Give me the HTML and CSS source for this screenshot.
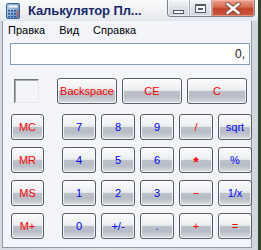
FILE: index.html
```html
<!DOCTYPE html>
<html lang="ru">
<head>
  <meta charset="UTF-8" />
  <title>Калькулятор</title>
  <link rel="stylesheet" href="styles.css">
</head>
<body>
  <div class="window">
    <div class="titlebar">
      <svg class="app-icon" width="14" height="16" viewBox="0 0 14 16">
        <defs>
          <linearGradient id="calc" x1="0" y1="0" x2="1" y2="1">
            <stop offset="0" stop-color="#cfe3f6" />
            <stop offset="1" stop-color="#4b7fbf" />
          </linearGradient>
        </defs>
        <rect x="0.5" y="0.5" width="13" height="15" rx="1.5" fill="url(#calc)" stroke="#3a5f94" />
        <rect x="2" y="2" width="10" height="3" fill="#eef6ff" stroke="#6f93c0" stroke-width="0.6" />
        <g fill="#2e5a98">
          <rect x="2" y="7" width="2" height="1.6" /><rect x="5" y="7" width="2" height="1.6" /><rect x="8" y="7" width="2" height="1.6" />
          <rect x="2" y="10" width="2" height="1.6" /><rect x="5" y="10" width="2" height="1.6" /><rect x="8" y="10" width="2" height="1.6" />
          <rect x="2" y="13" width="2" height="1.4" /><rect x="5" y="13" width="2" height="1.4" /><rect x="8" y="13" width="2" height="1.4" />
        </g>
        <rect x="10.8" y="7" width="1.4" height="7" fill="#c94a4a" />
      </svg>
      <span class="title">Калькулятор Пл...</span>
      <div class="caption">
        <div class="cap-btn">
          <span class="glyph-min"></span>
        </div>
        <div class="cap-btn">
          <span class="glyph-max"></span>
        </div>
        <div class="cap-btn close">
          <svg width="16" height="13" viewBox="0 0 16 13">
            <path d="M2.5 2 L13.5 11 M13.5 2 L2.5 11" stroke="#7d4b40" stroke-width="4.4" stroke-linecap="round" />
            <path d="M2.5 2 L13.5 11 M13.5 2 L2.5 11" stroke="#ffffff" stroke-width="2.6" stroke-linecap="round" />
          </svg>
        </div>
      </div>
    </div>

    <div class="client">
      <div class="menubar">
        <span>Правка</span>
        <span>Вид</span>
        <span>Справка</span>
      </div>

      <div class="display">0,</div>

      <div class="toprow">
        <div class="memory-box"></div>
        <div class="edit-keys">
          <button class="key red">Backspace</button>
          <button class="key red">CE</button>
          <button class="key red">C</button>
        </div>
      </div>

      <div class="pad">
        <button class="key mem red">MC</button>
        <button class="key blue">7</button>
        <button class="key blue">8</button>
        <button class="key blue">9</button>
        <button class="key red">/</button>
        <button class="key blue">sqrt</button>

        <button class="key mem red">MR</button>
        <button class="key blue">4</button>
        <button class="key blue">5</button>
        <button class="key blue">6</button>
        <button class="key red big">*</button>
        <button class="key blue">%</button>

        <button class="key mem red">MS</button>
        <button class="key blue">1</button>
        <button class="key blue">2</button>
        <button class="key blue">3</button>
        <button class="key red">&minus;</button>
        <button class="key blue">1/x</button>

        <button class="key mem red">M+</button>
        <button class="key blue">0</button>
        <button class="key blue">+/-</button>
        <button class="key blue">.</button>
        <button class="key red">+</button>
        <button class="key red">=</button>
      </div>
    </div>
  </div>
</body>
</html>
```

FILE: styles.css
```css
* {
  box-sizing: border-box;
  margin: 0;
  padding: 0;
}

body {
  background-color: #34452e;
  width: 261px;
  height: 250px;
  overflow: hidden;
  font-family: "Liberation Sans", Arial, sans-serif;
}

.window {
  width: 258px;
  height: 250px;
  display: flex;
  flex-direction: column;
  background: linear-gradient(90deg, #d4d9e0, #e3e7ec 40%, #d2d7de);
}

.titlebar {
  height: 21px;
  display: flex;
  align-items: flex-start;
  background: linear-gradient(#f9fafb, #eef0f3 60%, #e3e6eb);
}

.app-icon {
  margin: 3px 0 0 6px;
}

.title {
  margin: 3px 0 0 8px;
  font-size: 13px;
  font-weight: bold;
  letter-spacing: -0.1px;
  color: #17296a;
}

.caption {
  margin-left: auto;
  margin-right: 3px;
  height: 17px;
  display: flex;
  border: 1px solid #7c838e;
  border-top: none;
  border-radius: 0 0 4px 4px;
  overflow: hidden;
  background: linear-gradient(#f2f4f7, #dde1e7 50%, #cfd4db);
}

.cap-btn {
  width: 22px;
  height: 16px;
  display: flex;
  align-items: center;
  justify-content: center;
  border-right: 1px solid #a3a9b2;
  box-shadow: inset 0 0 0 1px rgba(255, 255, 255, 0.6);
}

.cap-btn.close {
  width: 42px;
  border-right: none;
  background: linear-gradient(#eba491, #d7674d 45%, #c4432b 55%, #cc5a3f);
  box-shadow: inset 0 0 0 1px rgba(255, 200, 180, 0.5);
}

.glyph-min {
  width: 11px;
  height: 4px;
  margin-top: 7px;
  border: 1px solid #555b64;
  background: #ffffff;
}

.glyph-max {
  width: 11px;
  height: 9px;
  border: 1px solid #555b64;
  border-top-width: 2px;
  background: #ffffff;
  box-shadow: inset 0 0 0 2px #ffffff, inset 0 0 0 3px #555b64;
}

.client {
  flex: 1;
  margin: 0 6px 2px 2px;
  border: 1px solid #8f98a3;
  border-top: none;
  background-color: #f3f5fa;
}

.menubar {
  height: 17px;
  display: flex;
  gap: 14px;
  padding: 3px 0 0 5px;
  font-size: 11px;
  color: #000000;
}

.display {
  width: 240px;
  height: 22px;
  margin: 5px 0 0 7px;
  padding: 3px 4px 0 0;
  border: 1px solid #7f9db9;
  background: #ffffff;
  text-align: right;
  font-size: 12px;
  color: #1a1a1a;
}

.toprow {
  display: flex;
  height: 26px;
  margin-top: 13px;
}

.memory-box {
  width: 25px;
  height: 24px;
  margin: 1px 18px 0 11px;
  border-top: 1px solid #6f747b;
  border-left: 1px solid #6f747b;
  border-right: 1px solid #e6e8ec;
  border-bottom: 1px solid #e6e8ec;
  box-shadow: inset 1px 1px 0 #a9adb3;
}

.edit-keys {
  display: grid;
  grid-template-columns: repeat(3, 60px);
  column-gap: 5px;
}

.pad {
  display: grid;
  grid-template-columns: 46px repeat(5, 34px);
  grid-auto-rows: 26px;
  column-gap: 5px;
  row-gap: 7px;
  margin: 10px 0 0 8px;
}

.key {
  height: 26px;
  border: 1px solid #575c63;
  border-radius: 3px;
  background: linear-gradient(#fbfbfc, #eef0f2 40%, #e4e7ea 48%, #bcc2ca 52%, #b7bdc6 72%, #d9dde1);
  box-shadow: inset 0 0 0 1px rgba(255, 255, 255, 0.75);
  font-family: "Liberation Sans", Arial, sans-serif;
  font-size: 11px;
  line-height: 24px;
  text-align: center;
}

.key.mem {
  width: 33px;
}

.key.big {
  font-size: 14px;
  font-weight: bold;
  line-height: 28px;
}

.red {
  color: #ff0000;
}

.blue {
  color: #0000ff;
}
```
